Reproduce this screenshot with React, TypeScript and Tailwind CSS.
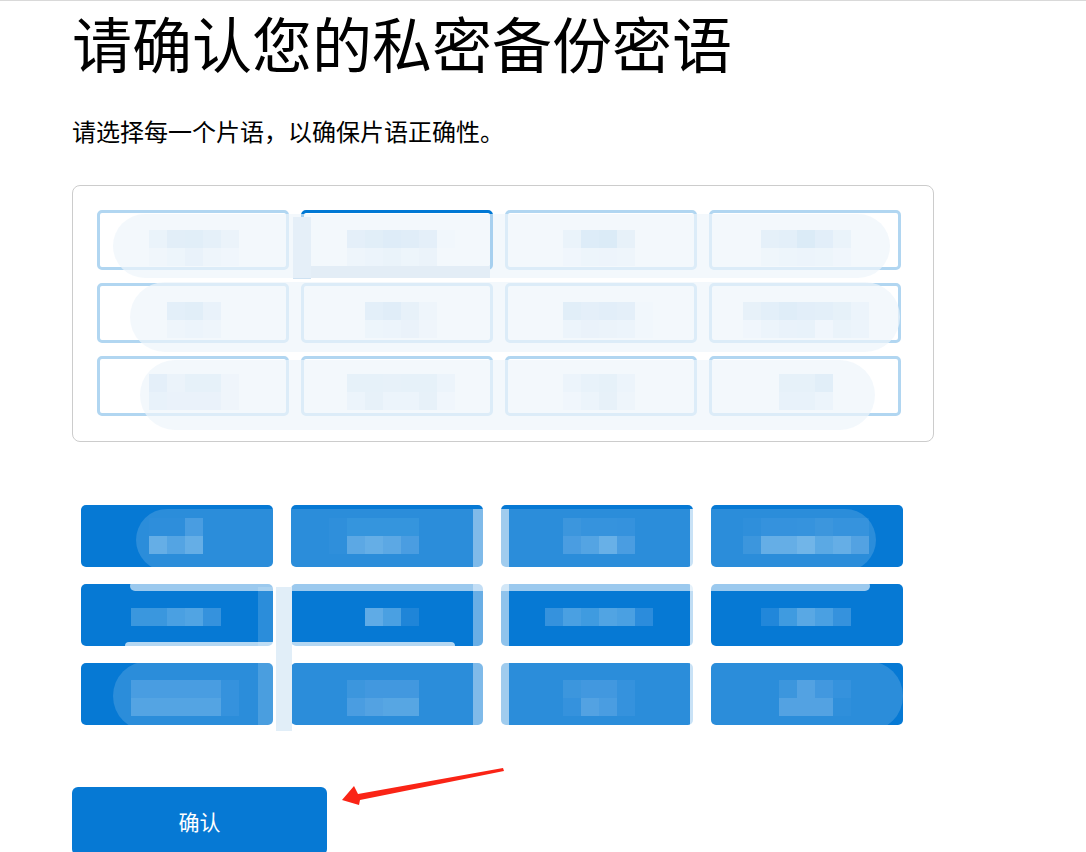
import React from 'react';

type Cell = { x: number; top: string[]; bottom?: string[] };

// mosaic blocks covering the redacted words, per row
const slotRows: { y: number; cells: Cell[] }[] = [
  {
    y: 229,
    cells: [
      { x: 149, top: ['#e2edf8', '#c6def2', '#c2dcf1', '#cfe3f4', '#e4eff9'], bottom: ['#f3f8fc', '#ecf3fa', '#ddeaf7', '#eef5fb', '#f5f9fd'] },
      { x: 347, top: ['#cbe0f3', '#c3dcf2', '#b7d8f1', '#c0dbf2', '#cbe1f4', '#f8fbfe'], bottom: ['#eef4fb', '#e8f1fa', '#e2eef9', '#eaf3fb', '#e5eff9', '#ffffff'] },
      { x: 563, top: ['#e2eef9', '#b5d6f1', '#aed2ef', '#d7e8f6'], bottom: ['#f3f8fd', '#ebf3fa', '#e9f2fa', '#eef5fb'] },
      { x: 761, top: ['#d0e4f5', '#c8dff3', '#b0d4ef', '#c5def3', '#e0edf9'], bottom: ['#f2f7fc', '#eaf3fb', '#e8f1fa', '#ebf3fa', '#f5f9fd'] },
    ],
  },
  {
    y: 301,
    cells: [
      { x: 167, top: ['#c8dff3', '#c3dcf2', '#ddebf7'], bottom: ['#eef5fb', '#e6f0fa', '#eef5fb'] },
      { x: 365, top: ['#c8dff3', '#c0dbf2', '#d8e8f6', '#eef5fb'], bottom: ['#eaf3fb', '#e8f1fa', '#dfecf8', '#f0f6fc'] },
      { x: 563, top: ['#c3dcf2', '#cce2f4', '#c5ddf3', '#cce1f4', '#f8fbfe'], bottom: ['#e8f1fa', '#dfecf8', '#e3eef9', '#e8f1fa', '#f8fbfe'] },
      { x: 743, top: ['#d8e8f6', '#c8dff3', '#bcd9f1', '#c5ddf3', '#c8dff3', '#d3e6f6', '#e6f1fa'], bottom: ['#f3f8fd', '#e6f0fa', '#ddebf7', '#d9e9f7', '#f3f8fd', '#e0edf8', '#e6f1fa'] },
    ],
  },
  {
    y: 373,
    cells: [
      { x: 149, top: ['#cde2f4', '#e3eff9', '#d4e6f6', '#d4e6f6', '#f0f6fc'], bottom: ['#d9e9f7', '#dfecf8', '#dfecf8', '#dfecf8', '#f0f6fc'] },
      { x: 347, top: ['#d4e6f6', '#d4e6f6', '#d6e8f6', '#d4e6f6', '#d4e6f6', '#e6f0fa'], bottom: ['#e6f0fa', '#d6e8f6', '#e6f1fa', '#e6f0fa', '#d6e8f6', '#f3f8fd'] },
      { x: 563, top: ['#e6f0fa', '#dbeaf7', '#d4e6f6', '#e6f0fa'], bottom: ['#f3f8fd', '#e6f0fa', '#d6e8f6', '#eef5fb'] },
      { x: 779, top: ['#d4e6f6', '#d4e6f6', '#c3dcf2'], bottom: ['#d9e9f7', '#d9e9f7', '#e6f0fa'] },
    ],
  },
];

const btnRows: { y: number; cells: Cell[] }[] = [
  {
    y: 517,
    cells: [
      { x: 149, top: ['#0a7bd5', '#0a7bd5', '#2a8cdc'], bottom: ['#4aa0e2', '#3795de', '#4aa0e2'] },
      { x: 329, top: ['#0b7cd5', '#1283d8', '#1283d8', '#1283d8', '#1283d8'], bottom: ['#0b7cd5', '#4099e0', '#4aa0e2', '#4099e0', '#2b8cdc'] },
      { x: 563, top: ['#1a84d8', '#1381d8', '#1381d8', '#127fd7'], bottom: ['#2b8cdc', '#3795de', '#4ea3e3', '#2b8cdc'] },
      { x: 743, top: ['#0b7cd5', '#127fd7', '#127fd7', '#1381d8', '#1a84d8', '#1381d8', '#1381d8'], bottom: ['#1a84d8', '#4aa0e2', '#4aa0e2', '#59a8e4', '#3f9be0', '#4aa0e2', '#3592dd'] },
    ],
  },
  {
    y: 607,
    cells: [
      { x: 131, top: ['#3a97de', '#3a97de', '#4aa0e2', '#51a4e3', '#3592dd'] },
      { x: 365, top: ['#5fabe6', '#4aa0e2', '#1f85d8'] },
      { x: 545, top: ['#3592dd', '#4aa0e2', '#3f9be0', '#51a4e3', '#4aa0e2', '#2b8cdc'] },
      { x: 761, top: ['#2187da', '#3f9be0', '#59a8e4', '#4aa0e2', '#3592dd'] },
    ],
  },
  {
    y: 679,
    cells: [
      { x: 131, top: ['#2a8cdc', '#2a8cdc', '#2a8cdc', '#2a8cdc', '#2a8cdc', '#127fd7'], bottom: ['#3795de', '#3795de', '#3795de', '#3795de', '#3795de', '#127fd7'] },
      { x: 347, top: ['#1a84d8', '#2287da', '#2287da', '#2287da'], bottom: ['#2b8cdc', '#3592dd', '#3a97de', '#3a97de'] },
      { x: 563, top: ['#1a84d8', '#2287da', '#2287da', '#127fd7'], bottom: ['#127fd7', '#3592dd', '#2b8cdc', '#127fd7'] },
      { x: 779, top: ['#1a84d8', '#3592dd', '#2287da', '#127fd7'], bottom: ['#3592dd', '#3592dd', '#3592dd', '#0b7cd5'] },
    ],
  },
];

function Mosaic({ rows }: { rows: { y: number; cells: Cell[] }[] }) {
  return (
    <>
      {rows.map((r) =>
        r.cells.map((c) => (
          <React.Fragment key={`${r.y}-${c.x}`}>
            {c.top.map((col, i) => (
              <div key={`t${i}`} className="absolute w-[18px] h-[18px]" style={{ left: c.x + i * 18, top: r.y, background: col }} />
            ))}
            {c.bottom?.map((col, i) => (
              <div key={`b${i}`} className="absolute w-[18px] h-[18px]" style={{ left: c.x + i * 18, top: r.y + 18, background: col }} />
            ))}
          </React.Fragment>
        ))
      )}
    </>
  );
}

export default function App() {
  const slots = Array.from({ length: 12 }, (_, i) => i);

  return (
    <div className="relative w-[1086px] h-[852px] overflow-hidden bg-white border-t border-[#d9d9d9] font-['Noto_Sans_CJK_SC','Noto_Sans',sans-serif] text-black">
      <div className="pl-[72px] pt-[5px]">
        <h1 className="text-[60px] leading-[72px] font-normal">请确认您的私密备份密语</h1>
        <p className="mt-[37px] text-[24px] leading-[32px]">请选择每一个片语，以确保片语正确性。</p>

        <div className="mt-[38px] w-[862px] border border-[#cccccc] rounded-[8px] pl-[24px] pt-[24px] pb-[25px]">
          <div className="grid grid-cols-[repeat(4,192px)] gap-x-[12px] gap-y-[13px]">
            {slots.map((i) => (
              <div
                key={i}
                className={`h-[60px] rounded-[5px] border-[3px] ${i === 1 ? 'border-[#0078d4]' : 'border-[#b1d6f1]'}`}
              />
            ))}
          </div>
        </div>

        <div className="mt-[63px] ml-[9px] grid grid-cols-[repeat(4,192px)] gap-x-[18px] gap-y-[17px]">
          {slots.map((i) => (
            <button key={i} className="h-[62px] rounded-[5px] bg-[#0679d4]" />
          ))}
        </div>

        <button className="mt-[62px] w-[255px] h-[68px] rounded-[6px] bg-[#0679d4] text-white text-[21px] leading-none">
          确认
        </button>
      </div>

      {/* redaction scribbles over the phrases */}
      <div className="absolute inset-0 pointer-events-none">
        <Mosaic rows={slotRows} />
        <div className="absolute left-[293px] top-[216px] w-[18px] h-[62px] bg-[#cfe2f2]" />
        <div className="absolute left-[311px] top-[265px] w-[179px] h-[12px] bg-[#c8dbea]" />
        <div className="absolute left-[113px] top-[213px] w-[777px] h-[64px] rounded-[32px] bg-[#eef5fb]/70" />
        <div className="absolute left-[130px] top-[281px] w-[770px] h-[70px] rounded-[35px] bg-[#eef5fb]/70" />
        <div className="absolute left-[140px] top-[359px] w-[735px] h-[70px] rounded-[35px] bg-[#eef5fb]/70" />

        <Mosaic rows={btnRows} />
        <div className="absolute left-[136px] top-[508px] w-[740px] h-[62px] rounded-[31px] bg-white/15" />
        <div className="absolute left-[130px] top-[580px] w-[740px] h-[10px] rounded-[5px] bg-white/60" />
        <div className="absolute left-[125px] top-[641px] w-[330px] h-[8px] rounded-[4px] bg-white/70" />
        <div className="absolute left-[113px] top-[660px] w-[790px] h-[70px] rounded-[35px] bg-white/15" />
        <div className="absolute left-[473px] top-[508px] w-[18px] h-[222px] bg-white/40" />
        <div className="absolute left-[491px] top-[508px] w-[18px] h-[222px] bg-white/55" />
        <div className="absolute left-[690px] top-[508px] w-[18px] h-[222px] bg-white/75" />
        <div className="absolute left-[258px] top-[586px] w-[18px] h-[144px] bg-white/15" />
        <div className="absolute left-[276px] top-[586px] w-[16px] h-[144px] bg-[#e1eef8]" />
      </div>

      {/* red arrow */}
      <svg className="absolute left-0 top-0 pointer-events-none" width="1086" height="852">
        <polygon points="342,799 354,785 358,793 503,767 504,770 360,799 359,804" fill="#fa2416" />
      </svg>
    </div>
  );
}
